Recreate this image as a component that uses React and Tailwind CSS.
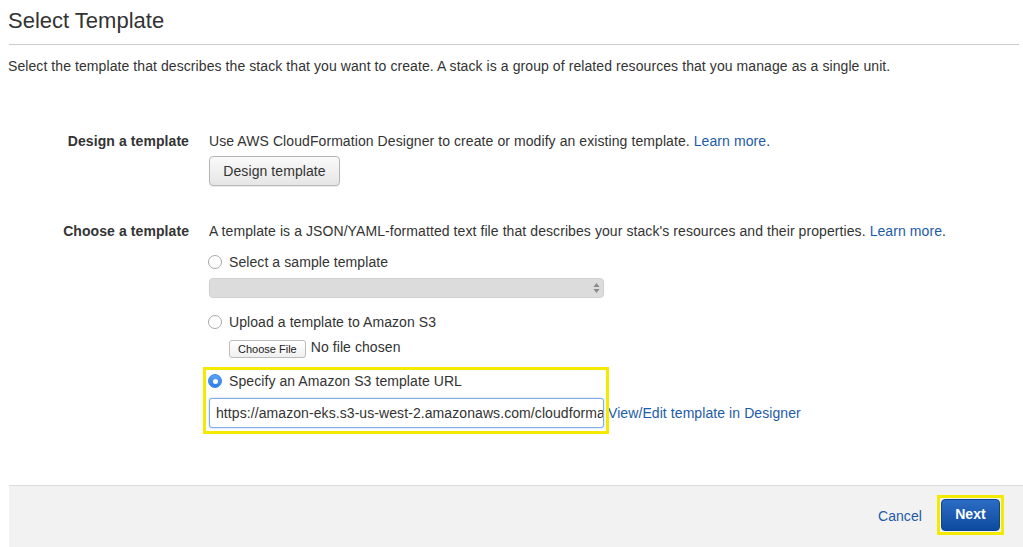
import React from "react";

const font = { fontFamily: '"Liberation Sans", Arial, sans-serif' };

const Radio = ({ checked }) =>
  checked ? (
    <span className="w-[14px] h-[14px] rounded-full bg-gradient-to-b from-[#5aa2f6] to-[#2a7de8] border border-[#3a86e6] flex items-center justify-center shrink-0">
      <span className="w-[5px] h-[5px] rounded-full bg-white" />
    </span>
  ) : (
    <span className="w-[14px] h-[14px] rounded-full bg-white border border-[#a9a9a9] shrink-0" />
  );

const Row = ({ label, children }) => (
  <div className="flex">
    <div className="w-[189px] shrink-0 text-right font-bold text-[#333] leading-5">{label}</div>
    <div className="pl-[20px] flex-1 flex flex-col">{children}</div>
  </div>
);

export default function App() {
  return (
    <div style={font} className="w-[1023px] h-[547px] bg-white text-[14px] tracking-[0.08px] text-[#333] flex flex-col overflow-hidden">
      {/* ================= HEADER ================= */}
      <div className="pl-[8px] pr-[4px]">
        <h1 className="pt-[8px] text-[22px] leading-[26px] tracking-normal text-[#333]">Select Template</h1>
        <div className="mt-[10px] ml-[1px] h-px bg-[#cccccc]" />
        <p className="mt-[11px] leading-5">
          Select the template that describes the stack that you want to create. A stack is a group of related resources that you manage as a single unit.
        </p>
      </div>

      {/* ================= DESIGN ================= */}
      <div className="mt-[55px]">
        <Row label="Design a template">
          <div className="leading-5">
            Use AWS CloudFormation Designer to create or modify an existing template.{" "}
            <span className="text-[#1c5ba9]">Learn more</span>.
          </div>
          <button className="mt-[5px] w-[131px] h-[30px] rounded-[4px] border border-[#b5b5b5] bg-gradient-to-b from-[#fafafa] to-[#e6e6e6] text-[#333] text-[14px] shadow-[0_1px_1px_rgba(0,0,0,0.08)]">
            Design template
          </button>
        </Row>
      </div>

      {/* ================= CHOOSE ================= */}
      <div className="mt-[35px]">
        <Row label="Choose a template">
          <div className="leading-5">
            A template is a JSON/YAML-formatted text file that describes your stack's resources and their properties.{" "}
            <span className="text-[#1c5ba9]">Learn more</span>.
          </div>

          <div className="mt-[11px] -ml-[1px] flex items-center gap-[7px] leading-5">
            <Radio />
            <span>Select a sample template</span>
          </div>
          <div className="mt-[6px] w-[395px] h-[20px] rounded-[4px] bg-[#dcdcdc] border border-[#d0d0d0] flex items-center justify-end pr-[3px]">
            <svg width="7" height="12" viewBox="0 0 7 12">
              <path d="M3.5 1 L6.5 5 L0.5 5 Z" fill="#8a8a8a" />
              <path d="M3.5 11 L6.5 7 L0.5 7 Z" fill="#8a8a8a" />
            </svg>
          </div>

          <div className="mt-[14px] -ml-[1px] flex items-center gap-[7px] leading-5">
            <Radio />
            <span>Upload a template to Amazon S3</span>
          </div>
          <div className="mt-[4px] pl-[20px] flex items-center gap-[5px] leading-5">
            <button className="mt-[4px] h-[18px] px-[8px] rounded-[3px] border border-[#bcbcbc] bg-gradient-to-b from-white to-[#f0f0f0] text-[11px] tracking-normal text-[#222] leading-none">
              Choose File
            </button>
            <span>No file chosen</span>
          </div>

          <div className="mt-[12px] flex items-start">
            <div className="relative w-[395px]">
              <span className="absolute -left-[6px] -top-[3px] w-[406px] h-[67px] border-[3px] border-[#f4ea00] pointer-events-none" />
              <div className="pt-[1px] -ml-[1px] flex items-center gap-[7px] leading-5">
                <Radio checked />
                <span>Specify an Amazon S3 template URL</span>
              </div>
              <input
                readOnly
                value="https://amazon-eks.s3-us-west-2.amazonaws.com/cloudformation/2018-08-30/amazon-eks-nodegroup.yaml"
                className="mt-[7px] block h-[30px] w-[395px] rounded-[3px] border border-[#7eaeea] shadow-[0_0_2px_rgba(80,140,230,0.5)] bg-white pl-[6px] text-[14px] text-[#333] outline-none"
                style={font}
              />
            </div>
            <span className="mt-[33px] ml-[4px] text-[#1c5ba9] leading-5">View/Edit template in Designer</span>
          </div>
        </Row>
      </div>

      {/* ================= FOOTER ================= */}
      <div className="mt-auto ml-[9px] h-[62px] bg-[#f2f2f2] border-t border-[#dddddd] flex items-center justify-end pr-[19px]">
        <span className="text-[#1c5ba9] mr-[15px]">Cancel</span>
        <div className="border-[3px] border-[#f4ea00] p-[1px] mb-[4px]">
          <button className="w-[59px] h-[32px] rounded-[4px] bg-gradient-to-b from-[#2d6cc4] to-[#0a4b9f] border border-[#0b4592] text-white font-bold text-[14px]">
            Next
          </button>
        </div>
      </div>
    </div>
  );
}
